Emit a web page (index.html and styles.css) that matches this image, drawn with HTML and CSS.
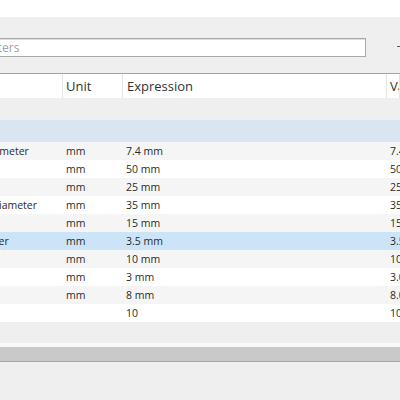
FILE: index.html
```html
<!DOCTYPE html>
<html>
<head>
<meta charset="utf-8">
<link rel="stylesheet" href="styles.css">
</head>
<body>
<div class="top"></div>
<div class="toolbar">
  <div class="search">Filter parameters</div>
  <div class="tool"><span class="dash"></span></div>
</div>
<div class="table">
  <div class="row head">
    <div class="c name">Name</div>
    <div class="c">Unit</div>
    <div class="c">Expression</div>
    <div class="c last">Value</div>
  </div>
  <div class="row group fav"><div class="c gname">Favorites</div><div class="c"></div><div class="c"></div><div class="c"></div></div>
  <div class="row group user"><div class="c gname">User Parameters</div><div class="c"></div><div class="c"></div><div class="c"></div></div>
  <div class="row odd"><div class="c name">Screw Hole Diameter</div><div class="c">mm</div><div class="c">7.4 mm</div><div class="c">7.40 mm</div></div>
  <div class="row"><div class="c name">Length</div><div class="c">mm</div><div class="c">50 mm</div><div class="c">50.00 mm</div></div>
  <div class="row odd"><div class="c name">Width</div><div class="c">mm</div><div class="c">25 mm</div><div class="c">25.00 mm</div></div>
  <div class="row"><div class="c name">Counterbore Diameter</div><div class="c">mm</div><div class="c">35 mm</div><div class="c">35.00 mm</div></div>
  <div class="row odd"><div class="c name">Height</div><div class="c">mm</div><div class="c">15 mm</div><div class="c">15.00 mm</div></div>
  <div class="row sel"><div class="c name">Inner Tab Spacer</div><div class="c">mm</div><div class="c">3.5 mm</div><div class="c">3.50 mm</div></div>
  <div class="row odd"><div class="c name">Depth</div><div class="c">mm</div><div class="c">10 mm</div><div class="c">10.00 mm</div></div>
  <div class="row"><div class="c name">Fillet</div><div class="c">mm</div><div class="c">3 mm</div><div class="c">3.00 mm</div></div>
  <div class="row odd"><div class="c name">Offset</div><div class="c">mm</div><div class="c">8 mm</div><div class="c">8.00 mm</div></div>
  <div class="row"><div class="c name">Count</div><div class="c"></div><div class="c">10</div><div class="c">10</div></div>
  <div class="empty"></div>
</div>
<div class="gap"></div>
<div class="scrollbar"></div>
</body>
</html>
```
FILE: styles.css
```css
html, body {
  margin: 0;
  padding: 0;
  background: #efefef;
  overflow: hidden;
  width: 400px;
  height: 400px;
  font-family: "Open Sans", "Noto Sans", sans-serif;
  color: #333;
}
.top {
  height: 17px;
  background: #ffffff;
}
.toolbar {
  height: 56px;
  display: flex;
  align-items: flex-start;
  padding-top: 21px;
  box-sizing: border-box;
}
.search {
  margin-left: -100px;
  width: 466px;
  height: 19px;
  box-sizing: border-box;
  background: #fff;
  border: 1px solid #a9a9a9;
  box-shadow: inset 1px 1px 0 #dcdcdc;
  font-size: 12px;
  line-height: 17px;
  padding-left: 22px;
  color: #a0a0a0;
  white-space: nowrap;
  overflow: hidden;
}
.tool {
  flex: 1;
  display: flex;
  justify-content: flex-end;
  padding-top: 8px;
}
.dash {
  width: 3px;
  height: 1px;
  background: #555;
}
.table {
  margin-left: -100px;
  width: 500px;
  border-top: 1px solid #a3a3a3;
}
.row {
  display: grid;
  grid-template-columns: 163px 60px 264px 1fr;
  height: 18px;
  background: #fff;
  font-size: 10.5px;
  line-height: 18px;
  color: #2b2b2b;
}
.row.odd { background: #f5f5f5; }
.row.sel { background: #cce4f7; }
.row.head {
  height: 24px;
  line-height: 24px;
  font-size: 13px;
  background: #fff;
  color: #333;
}
.row.head .c { border-right: 1px solid #e5e5e5; padding-left: 3px; }
.row.head .c:nth-child(3) { padding-left: 4px; }
.row.group { height: 22px; line-height: 22px; }
.row.fav { background: #efefef; }
.row.user { background: #d9e5f0; }
.c {
  box-sizing: border-box;
  padding-left: 3px;
  white-space: nowrap;
  overflow: hidden;
}
.c.name { padding-left: 26px; }
.c.gname { padding-left: 6px; }
.empty {
  height: 21px;
  background: #efefef;
}
.gap {
  height: 4px;
  background: #fafafa;
}
.scrollbar {
  height: 14px;
  background: #c9c9c9;
  border-bottom: 1px solid #a8a8a8;
}
```
